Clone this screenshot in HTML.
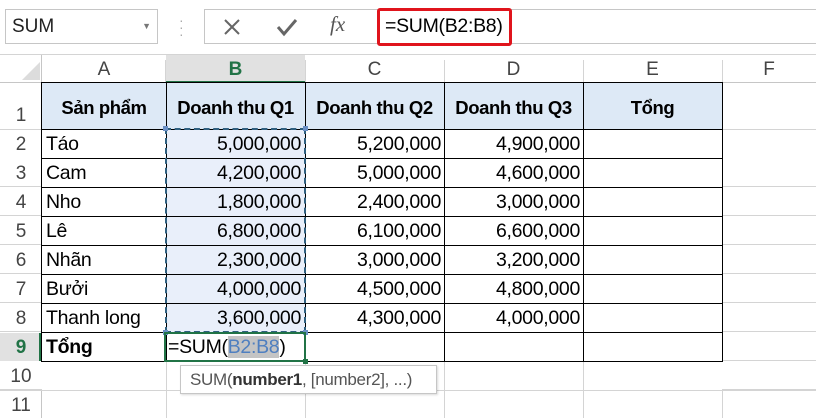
<!DOCTYPE html>
<html><head><meta charset="utf-8"><style>
*{margin:0;padding:0;box-sizing:border-box}
body{width:816px;height:418px;background:#fff;position:relative;overflow:hidden;font-family:"Liberation Sans",Arial,sans-serif;color:#000}
.a{position:absolute}
.c{position:absolute;font-size:19.5px;white-space:nowrap;line-height:29px;letter-spacing:-0.3px}
.h{font-weight:bold;font-size:18.5px;letter-spacing:-0.4px}
.hd{position:absolute;font-size:19px;color:#444;text-align:center;line-height:27px}
.rn{position:absolute;left:0;width:42px;text-align:center;font-size:19px;color:#444;line-height:29px}
</style></head><body>
<div class="a" style="left:0;top:0;width:816px;height:55px;background:#fff;border-bottom:1px solid #d4d4d4"></div>
<div class="a" style="left:5px;top:9px;width:153px;height:35px;border:1px solid #c6c6c6;font-size:19px;line-height:33px;padding-left:6px;color:#222">SUM<span style="position:absolute;right:6px;top:0;font-size:9px;color:#777">▼</span></div>
<div class="a" style="left:179px;top:17px;font-size:14px;color:#aaa;line-height:7px">·<br>·<br>·</div>
<div class="a" style="left:204px;top:9px;width:175px;height:35px;border:1px solid #c6c6c6;border-right:none"></div>
<svg class="a" style="left:222px;top:17px" width="20" height="20"><path d="M3 3L17 17M17 3L3 17" stroke="#666" stroke-width="2"/></svg>
<svg class="a" style="left:275px;top:17px" width="24" height="20"><path d="M3 10L9 17L21 3" stroke="#666" stroke-width="3" fill="none"/></svg>
<div class="a" style="left:330px;top:12px;font-family:'Liberation Serif',serif;font-style:italic;font-size:21px;color:#555">fx</div>
<div class="a" style="left:379px;top:9px;width:437px;height:35px;border-top:1px solid #c6c6c6;border-bottom:1px solid #c6c6c6"></div>
<div class="a" style="left:377px;top:8px;width:135px;height:38px;border:3px solid #e0141c;border-radius:3px;font-size:19.5px;line-height:31px;padding-left:5px;letter-spacing:-0.3px;white-space:nowrap">=SUM(B2:B8)</div>
<div class="a" style="left:0;top:55px;width:816px;height:28px;background:#fff;border-bottom:1px solid #c6c6c6"></div>
<svg class="a" style="left:22px;top:62px" width="18" height="18"><path d="M18 0L18 18L0 18Z" fill="#dcdcdc"/></svg>
<div class="a" style="left:166px;top:55px;width:139px;height:28px;background:#e1e1e1;border-bottom:2px solid #217346"></div>
<div class="hd" style="left:42px;top:56px;width:124px">A</div>
<div class="hd" style="left:166px;top:56px;width:139px;color:#217346;font-weight:bold">B</div>
<div class="hd" style="left:305px;top:56px;width:139px">C</div>
<div class="hd" style="left:444px;top:56px;width:139px">D</div>
<div class="hd" style="left:583px;top:56px;width:139px">E</div>
<div class="hd" style="left:722px;top:56px;width:94px">F</div>
<div class="a" style="left:41px;top:55px;width:1px;height:363px;background:#c6c6c6"></div>
<div class="a" style="left:165px;top:60px;width:1px;height:23px;background:#d4d4d4"></div>
<div class="a" style="left:305px;top:60px;width:1px;height:23px;background:#d4d4d4"></div>
<div class="a" style="left:444px;top:60px;width:1px;height:23px;background:#d4d4d4"></div>
<div class="a" style="left:583px;top:60px;width:1px;height:23px;background:#d4d4d4"></div>
<div class="a" style="left:722px;top:60px;width:1px;height:358px;background:#d4d4d4"></div>
<div class="a" style="left:0;top:390px;width:816px;height:1px;background:#d4d4d4"></div>
<div class="a" style="left:166px;top:361px;width:1px;height:57px;background:#d4d4d4"></div>
<div class="a" style="left:305px;top:361px;width:1px;height:57px;background:#d4d4d4"></div>
<div class="a" style="left:444px;top:361px;width:1px;height:57px;background:#d4d4d4"></div>
<div class="a" style="left:583px;top:361px;width:1px;height:57px;background:#d4d4d4"></div>
<div class="a" style="left:722px;top:129px;width:94px;height:1px;background:#d4d4d4"></div>
<div class="a" style="left:722px;top:158px;width:94px;height:232px;background:repeating-linear-gradient(#fff 0 28px,#d4d4d4 28px 29px)"></div>
<div class="a" style="left:0;top:129px;width:42px;height:1px;background:#d4d4d4"></div>
<div class="a" style="left:0;top:158px;width:42px;height:232px;background:repeating-linear-gradient(#fff 0 28px,#d4d4d4 28px 29px)"></div>
<div class="a" style="left:0;top:333px;width:41px;height:28px;background:#e1e1e1;border-right:2px solid #217346"></div>
<div class="a" style="left:42px;top:83px;width:680px;height:46px;background:#dde9f6"></div>
<div class="a" style="left:166px;top:129px;width:139px;height:203px;background:#e9effa"></div>
<table class="a" style="left:41px;top:82px;border-collapse:collapse">
<tr style="height:47px"><td style="width:125px;border:1px solid #000"></td><td style="width:139px;border:1px solid #000"></td><td style="width:139px;border:1px solid #000"></td><td style="width:139px;border:1px solid #000"></td><td style="width:139px;border:1px solid #000"></td></tr>
<tr style="height:29px"><td style="border:1px solid #000"></td><td style="border:1px solid #000"></td><td style="border:1px solid #000"></td><td style="border:1px solid #000"></td><td style="border:1px solid #000"></td></tr>
<tr style="height:29px"><td style="border:1px solid #000"></td><td style="border:1px solid #000"></td><td style="border:1px solid #000"></td><td style="border:1px solid #000"></td><td style="border:1px solid #000"></td></tr>
<tr style="height:29px"><td style="border:1px solid #000"></td><td style="border:1px solid #000"></td><td style="border:1px solid #000"></td><td style="border:1px solid #000"></td><td style="border:1px solid #000"></td></tr>
<tr style="height:29px"><td style="border:1px solid #000"></td><td style="border:1px solid #000"></td><td style="border:1px solid #000"></td><td style="border:1px solid #000"></td><td style="border:1px solid #000"></td></tr>
<tr style="height:29px"><td style="border:1px solid #000"></td><td style="border:1px solid #000"></td><td style="border:1px solid #000"></td><td style="border:1px solid #000"></td><td style="border:1px solid #000"></td></tr>
<tr style="height:29px"><td style="border:1px solid #000"></td><td style="border:1px solid #000"></td><td style="border:1px solid #000"></td><td style="border:1px solid #000"></td><td style="border:1px solid #000"></td></tr>
<tr style="height:29px"><td style="border:1px solid #000"></td><td style="border:1px solid #000"></td><td style="border:1px solid #000"></td><td style="border:1px solid #000"></td><td style="border:1px solid #000"></td></tr>
<tr style="height:29px"><td style="border:1px solid #000"></td><td style="border:1px solid #000"></td><td style="border:1px solid #000"></td><td style="border:1px solid #000"></td><td style="border:1px solid #000"></td></tr>
</table>
<div class="a" style="left:165px;top:128px;width:141px;height:205px;border:2px dashed #2f5f7f"></div>
<div class="a" style="left:163px;top:126px;width:5px;height:5px;background:#6a8fc4"></div>
<div class="a" style="left:303px;top:126px;width:5px;height:5px;background:#6a8fc4"></div>
<div class="a" style="left:163px;top:330px;width:5px;height:5px;background:#6a8fc4"></div>
<div class="a" style="left:303px;top:330px;width:5px;height:5px;background:#6a8fc4"></div>
<div class="a" style="left:164px;top:332px;width:142px;height:30px;border:2px solid #217346"></div>
<div class="a" style="left:303px;top:359px;width:5px;height:5px;background:#217346"></div>
<div class="rn" style="top:101px">1</div>
<div class="rn" style="top:130px">2</div>
<div class="rn" style="top:159px">3</div>
<div class="rn" style="top:188px">4</div>
<div class="rn" style="top:217px">5</div>
<div class="rn" style="top:246px">6</div>
<div class="rn" style="top:275px">7</div>
<div class="rn" style="top:304px">8</div>
<div class="rn" style="top:333px;color:#217346;font-weight:bold">9</div>
<div class="rn" style="top:362px">10</div>
<div class="rn" style="top:391px">11</div>
<div class="c h" style="left:42px;top:93px;width:124px;text-align:center">Sản phẩm</div>
<div class="c h" style="left:166px;top:93px;width:139px;text-align:center">Doanh thu Q1</div>
<div class="c h" style="left:305px;top:93px;width:139px;text-align:center">Doanh thu Q2</div>
<div class="c h" style="left:444px;top:93px;width:139px;text-align:center">Doanh thu Q3</div>
<div class="c h" style="left:583px;top:93px;width:139px;text-align:center">Tổng</div>
<div class="c" style="left:46px;top:130px">Táo</div>
<div class="c" style="left:46px;top:159px">Cam</div>
<div class="c" style="left:46px;top:188px">Nho</div>
<div class="c" style="left:46px;top:217px">Lê</div>
<div class="c" style="left:46px;top:246px">Nhãn</div>
<div class="c" style="left:46px;top:275px">Bưởi</div>
<div class="c" style="left:46px;top:304px">Thanh long</div>
<div class="c" style="left:46px;top:333px;font-weight:bold">Tổng</div>
<div class="c" style="right:515px;top:130px">5,000,000</div>
<div class="c" style="right:515px;top:159px">4,200,000</div>
<div class="c" style="right:515px;top:188px">1,800,000</div>
<div class="c" style="right:515px;top:217px">6,800,000</div>
<div class="c" style="right:515px;top:246px">2,300,000</div>
<div class="c" style="right:515px;top:275px">4,000,000</div>
<div class="c" style="right:515px;top:304px">3,600,000</div>
<div class="c" style="right:375px;top:130px">5,200,000</div>
<div class="c" style="right:375px;top:159px">5,000,000</div>
<div class="c" style="right:375px;top:188px">2,400,000</div>
<div class="c" style="right:375px;top:217px">6,100,000</div>
<div class="c" style="right:375px;top:246px">3,000,000</div>
<div class="c" style="right:375px;top:275px">4,500,000</div>
<div class="c" style="right:375px;top:304px">4,300,000</div>
<div class="c" style="right:236px;top:130px">4,900,000</div>
<div class="c" style="right:236px;top:159px">4,600,000</div>
<div class="c" style="right:236px;top:188px">3,000,000</div>
<div class="c" style="right:236px;top:217px">6,600,000</div>
<div class="c" style="right:236px;top:246px">3,200,000</div>
<div class="c" style="right:236px;top:275px">4,800,000</div>
<div class="c" style="right:236px;top:304px">4,000,000</div>
<div class="c" style="left:168px;top:333px">=SUM(<span style="background:#c4c4c4;color:#4f7fc0">B2:B8</span>)</div>
<div class="a" style="left:180px;top:365px;width:257px;height:29px;background:#fff;border:1px solid #c6c6c6;box-shadow:1px 1px 2px rgba(0,0,0,.15);font-size:17px;line-height:27px;padding-left:9px;color:#555;white-space:nowrap;letter-spacing:-0.3px">SUM(<b style="color:#333">number1</b>, [number2], ...)</div>
</body></html>
